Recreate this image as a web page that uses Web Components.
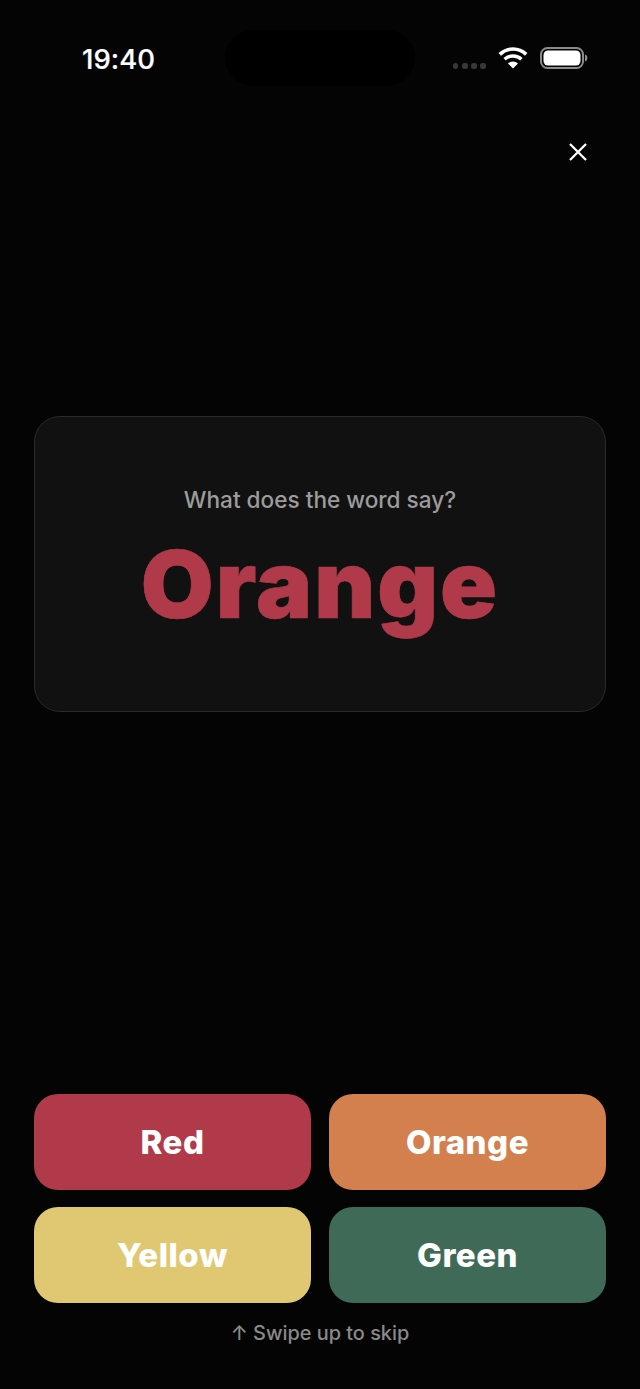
<!DOCTYPE html>
<html lang="en"><head><meta charset="utf-8"><title>Stroop</title>
<style>
html,body{margin:0;padding:0;background:#040404;}
body{width:640px;height:1389px;overflow:hidden;font-family:Inter,"Liberation Sans",sans-serif;}
</style></head><body>
<template id="t-status"><style>
:host{display:grid;grid-template-columns:1fr 190px 1fr;height:116px;box-sizing:border-box;padding:30px 52px 0 52px;align-items:start;color:#fff;}
.time{font:500 27.5px/1 Inter,sans-serif;margin:16px 0 0 30px;letter-spacing:.05px;-webkit-text-stroke:.2px #fff;}
.island{height:56px;border-radius:28px;background:#000;}
.right{display:flex;align-items:flex-start;justify-content:flex-end;gap:11.5px;margin-top:16px;}
.dots{display:flex;gap:3.4px;margin-top:17px;}
.dots i{width:5.8px;height:5.8px;border-radius:40%;background:#383838;}
svg{display:block}
</style><div class="time">19:40</div><div class="island"></div><div class="right"><div class="dots"><i></i><i></i><i></i><i></i></div>
<svg width="30" height="24" viewBox="0 0 30 24" style="margin:0 2px 0 0"><path d="M1.800 8.400A19 19 0 0 1 15 3a19 19 0 0 1 13.200 5.400" fill="none" stroke="#fff" stroke-width="3.600"/><path d="M6.600 13.300A12 12 0 0 1 15 10a12 12 0 0 1 8.400 3.300" fill="none" stroke="#fff" stroke-width="3.400"/><path d="M15 22.500l-5-5a7 7 0 0 1 10 0z" fill="#fff"/></svg>
<svg width="48" height="24" viewBox="0 0 48 24" style="margin-left:-1px"><rect x="1" y="2" width="42" height="20" rx="6.500" fill="none" stroke="#8a8a8a" stroke-width="2"/><rect x="3.500" y="4.500" width="37" height="15" rx="4.500" fill="#fff"/><path d="M45 8.500c1.600.4 2.400 1.800 2.400 3.500s-.8 3.100-2.400 3.500z" fill="#8a8a8a"/></svg></div></template>

<template id="t-close"><style>
:host{display:flex;justify-content:flex-end;padding:0 53px 0 0;height:300px;}
svg{display:block;margin-top:26.500px}
</style><svg width="18" height="18" viewBox="0 0 18 18"><path d="M1 1l16 16M17 1L1 17" stroke="#fff" stroke-width="2.300" fill="none"/></svg></template>

<template id="t-card"><style>
:host{display:flex;flex-direction:column;align-items:center;box-sizing:border-box;margin:0 34px;height:296px;background:#111;border:1.500px solid #2a2a2a;border-radius:26px;padding-top:69px;}
.q{font:550 22.600px/28px Inter,sans-serif;color:#9c9c9c;}
.w{font:900 94px/100px Inter,sans-serif;letter-spacing:2px;-webkit-text-stroke:.7px #b13a4a;color:#b13a4a;margin-top:20px;}
</style><div class="q"><slot name="q"></slot></div><div class="w"><slot name="w"></slot></div></template>

<template id="t-answers"><style>
:host{display:grid;grid-template-columns:277px 277px;gap:17px 18px;margin:382px 34px 0;}
</style><slot></slot></template>

<template id="t-btn"><style>
:host{display:flex;height:96px;align-items:center;justify-content:center;border-radius:24px;background:var(--c);color:#fff;font:800 33px/1 Inter,sans-serif;letter-spacing:.5px;}
</style><slot></slot></template>

<template id="t-hint"><style>
:host{display:block;text-align:center;margin-top:18px;font:550 19.900px/24px Inter,sans-serif;color:#8a8a8a;}
</style><slot></slot></template>

<stroop-app-status></stroop-app-status>
<stroop-close></stroop-close>
<stroop-card><span slot="q">What does the word say?</span><span slot="w">Orange</span></stroop-card>
<stroop-answers>
<stroop-btn style="--c:#b13a4a">Red</stroop-btn>
<stroop-btn style="--c:#d3804e">Orange</stroop-btn>
<stroop-btn style="--c:#e0c873">Yellow</stroop-btn>
<stroop-btn style="--c:#406a58">Green</stroop-btn>
</stroop-answers>
<stroop-hint>↑ Swipe up to skip</stroop-hint>
<script>
[['stroop-app-status','t-status'],['stroop-close','t-close'],['stroop-card','t-card'],['stroop-answers','t-answers'],['stroop-btn','t-btn'],['stroop-hint','t-hint']].forEach(([n,t])=>{
customElements.define(n,class extends HTMLElement{constructor(){super();this.attachShadow({mode:'open'}).appendChild(document.getElementById(t).content.cloneNode(true));}});
});
</script>
</body></html>
